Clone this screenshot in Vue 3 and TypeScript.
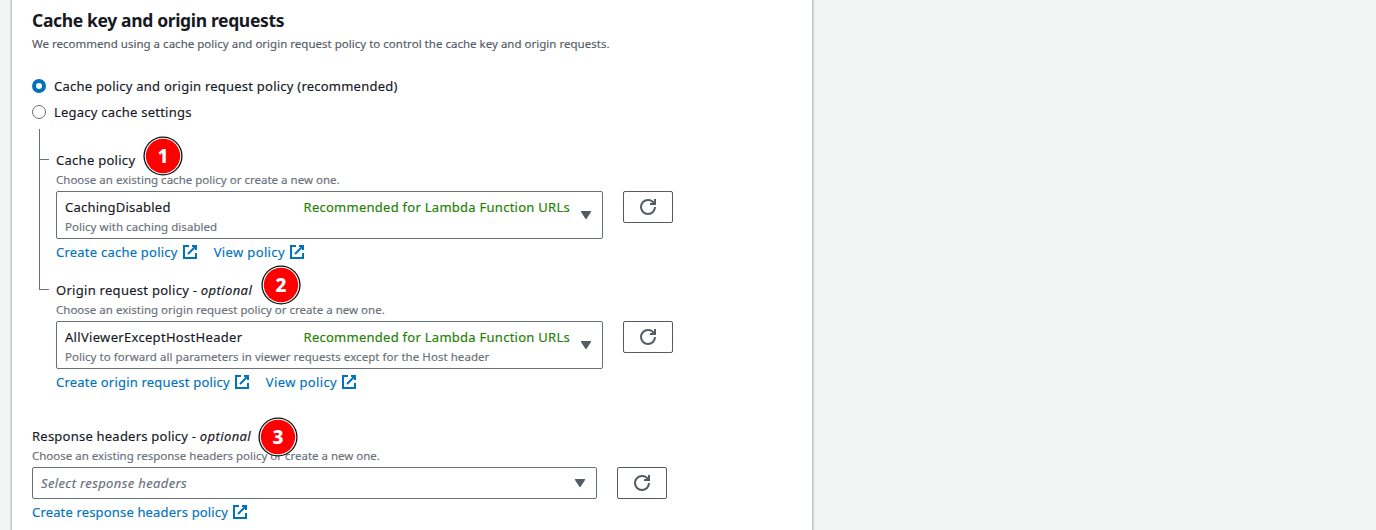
<script setup lang="ts">
import { ref } from 'vue'

interface Policy {
  id: number
  key: string
  label: string
  optional: boolean
  hint: string
  value: string
  detail: string
  create: string
}

const mode = ref<'policy' | 'legacy'>('policy')

const modes: { value: 'policy' | 'legacy'; label: string }[] = [
  { value: 'policy', label: 'Cache policy and origin request policy (recommended)' },
  { value: 'legacy', label: 'Legacy cache settings' },
]

const policies: Policy[] = [
  {
    id: 1,
    key: 'cache',
    label: 'Cache policy',
    optional: false,
    hint: 'Choose an existing cache policy or create a new one.',
    value: 'CachingDisabled',
    detail: 'Policy with caching disabled',
    create: 'Create cache policy',
  },
  {
    id: 2,
    key: 'origin',
    label: 'Origin request policy',
    optional: true,
    hint: 'Choose an existing origin request policy or create a new one.',
    value: 'AllViewerExceptHostHeader',
    detail: 'Policy to forward all parameters in viewer requests except for the Host header',
    create: 'Create origin request policy',
  },
]
</script>

<template>
  <main class="page">
    <section class="card">
      <h2 class="title">Cache key and origin requests</h2>
      <p class="intro">
        We recommend using a cache policy and origin request policy to control the cache key and origin requests.
      </p>

      <div class="modes">
        <div v-for="m in modes" :key="m.value" class="mode" @click="mode = m.value">
          <span class="radio" :class="{ checked: mode === m.value }"></span>
          <span>{{ m.label }}</span>
        </div>
      </div>

      <div class="tree">
        <div class="rail">
          <span class="branch first"></span>
          <span class="branch second"></span>
        </div>
        <div class="fields">
          <div v-for="p in policies" :key="p.key" class="field" :class="p.key">
            <div class="label">
              {{ p.label }}<template v-if="p.optional"> - <i>optional</i></template>
              <svg class="badge" viewBox="0 0 40 40">
                <circle cx="20" cy="20" r="19.6" fill="#111" />
                <circle cx="20" cy="20" r="18.3" fill="#fff" />
                <circle cx="20" cy="20" r="17.2" fill="#f00" />
                <text x="20" y="27">{{ p.id }}</text>
              </svg>
            </div>
            <div class="hint">{{ p.hint }}</div>
            <div class="control">
              <div class="select tall">
                <div class="option">
                  <div class="top">
                    <span class="value">{{ p.value }}</span>
                    <span class="tag">Recommended for Lambda Function URLs</span>
                  </div>
                  <div class="detail">{{ p.detail }}</div>
                </div>
                <svg class="caret" viewBox="0 0 10 8"><path d="M1 1h8L5 7z" /></svg>
              </div>
              <button class="refresh" aria-label="Refresh">
                <svg viewBox="0 0 16 16"><path d="M15 8c0 3.87-3.13 7-7 7s-7-3.13-7-7 3.13-7 7-7c2.79 0 5.2 1.63 6.33 4" /><path d="M10 5h5V0" /></svg>
              </button>
            </div>
            <div class="links">
              <a class="link">{{ p.create }}<svg viewBox="0 0 16 16"><path d="M10 2h4v4M6 10l8-8" /><path d="M14 9.05V14H2V2h5" /></svg></a>
              <a class="link view">View policy<svg viewBox="0 0 16 16"><path d="M10 2h4v4M6 10l8-8" /><path d="M14 9.05V14H2V2h5" /></svg></a>
            </div>
          </div>
        </div>
      </div>

      <div class="field response">
        <div class="label">
          Response headers policy - <i>optional</i>
          <svg class="badge" viewBox="0 0 40 40">
            <circle cx="20" cy="20" r="19.6" fill="#111" />
            <circle cx="20" cy="20" r="18.3" fill="#fff" />
            <circle cx="20" cy="20" r="17.2" fill="#f00" />
            <text x="20" y="27">3</text>
          </svg>
        </div>
        <div class="hint">Choose an existing response headers policy or create a new one.</div>
        <div class="control">
          <div class="select wide">
            <span class="placeholder">Select response headers</span>
            <svg class="caret" viewBox="0 0 10 8"><path d="M1 1h8L5 7z" /></svg>
          </div>
          <button class="refresh" aria-label="Refresh">
            <svg viewBox="0 0 16 16"><path d="M15 8c0 3.87-3.13 7-7 7s-7-3.13-7-7 3.13-7 7-7c2.79 0 5.2 1.63 6.33 4" /><path d="M10 5h5V0" /></svg>
          </button>
        </div>
        <div class="links">
          <a class="link">Create response headers policy<svg viewBox="0 0 16 16"><path d="M10 2h4v4M6 10l8-8" /><path d="M14 9.05V14H2V2h5" /></svg></a>
        </div>
      </div>
    </section>
  </main>
</template>

<style>
body {
  background: #f2f3f3;
  overflow: hidden;
}
</style>

<style scoped>
.page {
  height: 530px;
  overflow: hidden;
  font: 13px/22px 'Noto Sans', 'Open Sans', sans-serif;
  letter-spacing: 0.23px;
  color: #16191f;
  background: #f2f3f3;
  -webkit-text-stroke-width: 0.15px;
}
.card {
  box-sizing: border-box;
  width: 802px;
  height: 560px;
  margin-left: 11px;
  padding: 9px 20px 0;
  background: #fff;
  border: solid #bcc5c8;
  border-width: 0 1px;
  box-shadow: 1px 0 1px rgba(0, 28, 36, 0.12), -1px 0 1px rgba(0, 28, 36, 0.08);
}
.title {
  margin: 0;
  font-size: 17.5px;
  line-height: 22px;
  font-weight: 700;
  letter-spacing: -0.35px;
  -webkit-text-stroke-width: 0;
}
.intro {
  margin: 4px 0 0;
  font-size: 11.5px;
  line-height: 18px;
  letter-spacing: 0.015px;
  color: #545b64;
  white-space: nowrap;
}
.modes {
  display: grid;
  gap: 4px;
  margin-top: 22px;
}
.mode {
  display: flex;
  align-items: center;
  gap: 8px;
  height: 22px;
}
.radio {
  box-sizing: border-box;
  width: 14px;
  height: 14px;
  border: 1px solid #687078;
  border-radius: 50%;
  background: #fff;
}
.radio.checked {
  border: 4px solid #0073bb;
}
.tree {
  display: flex;
  margin-top: 6px;
}
.rail {
  display: flex;
  flex-direction: column;
  width: 17px;
  margin-left: 7px;
}
.branch {
  box-sizing: border-box;
  width: 10px;
  border: solid #687078;
  border-width: 0 0 1px 1px;
}
.branch.first {
  height: 31px;
}
.branch.second {
  height: 130px;
}
.fields {
  display: grid;
  gap: 16px;
  padding-top: 20px;
}
.label {
  position: relative;
  z-index: 1;
  width: max-content;
  height: 22px;
}
.label i {
  letter-spacing: 0.4px;
}
.cache .label,
.origin .label {
  letter-spacing: 0.28px;
}
.hint {
  height: 18px;
  margin-bottom: 2px;
  font-size: 11.5px;
  line-height: 18px;
  letter-spacing: 0.01px;
  color: #687078;
}
.response .hint {
  letter-spacing: -0.01px;
}
.badge {
  position: absolute;
  width: 40px;
  height: 40px;
}
.badge text {
  fill: #fff;
  font-size: 19px;
  font-weight: 800;
  letter-spacing: 0;
  text-anchor: middle;
  -webkit-text-stroke-width: 0;
}
.cache .badge {
  left: 87px;
  top: -13px;
}
.origin .badge {
  left: 205px;
  top: -14px;
}
.response .badge {
  left: 226px;
  top: -8px;
}
.control {
  display: flex;
  align-items: flex-start;
  gap: 20px;
}
.select {
  box-sizing: border-box;
  display: flex;
  align-items: center;
  justify-content: space-between;
  border: 1px solid #687078;
  border-radius: 2px;
  background: #fff;
}
.select.tall {
  width: 547px;
  height: 48px;
  padding: 0 11px 0 8px;
}
.select.wide {
  width: 565px;
  height: 32px;
  padding: 0 11px 0 8px;
}
.option {
  width: 505px;
  height: 40px;
}
.top {
  display: flex;
  justify-content: space-between;
  height: 24px;
  line-height: 24px;
}
.origin .value {
  letter-spacing: 0.31px;
}
.tag {
  color: #1d8102;
  letter-spacing: 0.265px;
}
.detail {
  font-size: 11.5px;
  line-height: 16px;
  letter-spacing: 0.05px;
  color: #687078;
}
.placeholder {
  font-style: italic;
  color: #687078;
  letter-spacing: 0.37px;
}
.caret {
  width: 10px;
  height: 8px;
  fill: #545b64;
  stroke: #545b64;
  stroke-width: 1.8;
  stroke-linejoin: miter;
}
.refresh {
  box-sizing: border-box;
  display: flex;
  align-items: center;
  justify-content: center;
  width: 50px;
  height: 32px;
  padding: 0;
  border: 1px solid #545b64;
  border-radius: 2px;
  background: #fff;
}
.refresh svg {
  width: 16px;
  height: 16px;
  overflow: visible;
  fill: none;
  stroke: #545b64;
  stroke-width: 2;
}
.links {
  display: flex;
  gap: 16px;
  height: 22px;
  margin-top: 2px;
}
.link {
  display: flex;
  align-items: center;
  gap: 4px;
  color: #0073bb;
}
.link svg {
  width: 16px;
  height: 16px;
  fill: none;
  stroke: #0073bb;
  stroke-width: 2;
}
.link.view {
  letter-spacing: 0.36px;
}
.origin .link:not(.view) {
  letter-spacing: 0.2px;
}
.response {
  margin-top: 32px;
}
.response .link {
  letter-spacing: 0.16px;
}
</style>
